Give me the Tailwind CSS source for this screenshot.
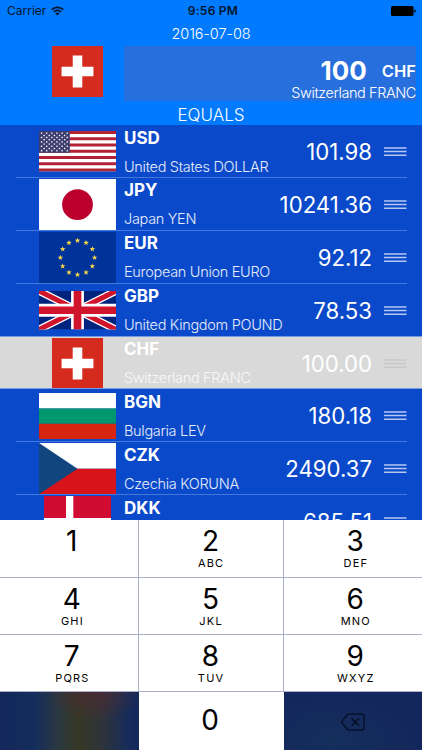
<!DOCTYPE html>
<html lang="en">
<head>
    <meta charset="UTF-8">
    <meta name="viewport" content="width=device-width, initial-scale=1.0">
    <title>Currency Converter</title>
    <script src="https://cdn.jsdelivr.net/npm/@tailwindcss/browser@4"></script>
</head>
<body class="bg-[#0a49c9] font-['Inter','Liberation_Sans',sans-serif]">

    <div class="w-[422px] h-[750px] overflow-hidden flex flex-col">
        <header class="h-[125px] shrink-0 bg-[#007aff] text-white">
            <!-- Status bar -->
            <div class="h-[22px] grid grid-cols-3 items-center pl-[7px] pr-[6px] text-[#03152d]">
                <div class="flex items-center gap-[5px] text-[12px]">
                    <span>Carrier</span>
                    <svg class="w-[13px] h-[10px]" viewBox="0 0 13 10" fill="none" stroke="currentColor" stroke-width="1.7">
                        <path d="M.7 3.7a8.2 8.2 0 0 1 11.6 0M2.8 5.9a5.2 5.2 0 0 1 7.4 0"/>
                        <path d="M6.5 9.6 4.4 7.5a3 3 0 0 1 4.2 0z" fill="currentColor" stroke="none"/>
                    </svg>
                </div>
                <div class="text-center text-[12px] font-semibold tracking-[0.25px] whitespace-nowrap pl-[3px]">9:56 PM</div>
                <svg class="w-[25px] h-[10px] justify-self-end" viewBox="0 0 25 10" fill="black">
                    <rect width="22.5" height="10" rx="1.5"/>
                    <path d="M23.3 3.2q1.5.4 1.5 1.8t-1.5 1.8z"/>
                </svg>
            </div>
            <div class="h-[24px] leading-[23px] text-center text-[14.5px] tracking-[-0.1px] font-light">2016-07-08</div>
            <div class="flex h-[55px] pl-[52px] pr-[6px]">
                <svg class="w-[51px] h-[51px] mr-[21px]" viewBox="0 0 32 32"><use href="#flag-ch"/></svg>
                <div class="flex-1 bg-[#276fdc] text-right pt-[12px]">
                    <div class="flex justify-end items-center gap-[15px] h-[26px]">
                        <span class="text-[26px] leading-[26px] font-bold">100</span>
                        <span class="text-[16.5px] leading-[26px] font-semibold">CHF</span>
                    </div>
                    <div class="text-[14.5px] leading-[17px] tracking-[-0.42px] font-light">Switzerland FRANC</div>
                </div>
            </div>
            <div class="h-[24px] leading-[29px] text-center text-[17px] font-light">EQUALS</div>
        </header>

        <main id="rates" class="h-[394.5px] shrink-0 overflow-hidden"></main>

        <!-- Number pad -->
        <div id="keypad" class="flex-1 grid grid-cols-[138.5px_145px_138.5px] grid-rows-[58px_57px_57px_58.5px] text-black"></div>
    </div>

    <svg class="hidden">
        <symbol id="flag-ch" viewBox="0 0 32 32">
            <path fill="#d52b1e" d="M0 0h32v32H0z"/>
            <path fill="#fff" d="M13 6h6v7h7v6h-7v7h-6v-7H6v-6h7z"/>
        </symbol>
        <symbol id="flag-us" viewBox="0 0 76 40" preserveAspectRatio="none">
            <path fill="#fff" d="M0 0h76v40H0z"/>
            <path stroke="#b22234" stroke-width="3.077" d="M0 1.54h76M0 7.69h76M0 13.85h76M0 20h76M0 26.15h76M0 32.3h76M0 38.46h76"/>
            <path fill="#3c3b6e" d="M0 0h30.4v21.54H0z"/>
            <g id="us-stars" fill="#fff"></g>
        </symbol>
        <symbol id="flag-jp" viewBox="0 0 90 60">
            <path fill="#fff" d="M0 0h90v60H0z"/>
            <circle cx="45" cy="30" r="18" fill="#bc002d"/>
        </symbol>
        <symbol id="flag-eu" viewBox="0 0 90 60">
            <path fill="#039" d="M0 0h90v60H0z"/>
            <g id="eu-stars" fill="#f7d54a"></g>
        </symbol>
        <symbol id="flag-gb" viewBox="0 0 60 30">
            <clipPath id="gb-clip"><path d="M30 15h30v15zv15H0zH0V0zV0h30z"/></clipPath>
            <path fill="#00247d" d="M0 0h60v30H0z"/>
            <path stroke="#fff" stroke-width="6" d="m0 0 60 30m0-30L0 30"/>
            <path stroke="#cf142b" stroke-width="4" clip-path="url(#gb-clip)" d="m0 0 60 30m0-30L0 30"/>
            <path stroke="#fff" stroke-width="10" d="M30 0v30M0 15h60"/>
            <path stroke="#cf142b" stroke-width="6" d="M30 0v30M0 15h60"/>
        </symbol>
        <symbol id="flag-bg" viewBox="0 0 50 30">
            <path fill="#fff" d="M0 0h50v10H0z"/>
            <path fill="#00966e" d="M0 10h50v10H0z"/>
            <path fill="#d62612" d="M0 20h50v10H0z"/>
        </symbol>
        <symbol id="flag-cz" viewBox="0 0 90 60">
            <path fill="#fff" d="M0 0h90v30H0z"/>
            <path fill="#d7141a" d="M0 30h90v30H0z"/>
            <path fill="#11457e" d="m0 0 45 30L0 60z"/>
        </symbol>
        <symbol id="flag-dk" viewBox="0 0 37 28">
            <path fill="#d00c33" d="M0 0h37v28H0z"/>
            <path fill="#fff" d="M12 0h4v28h-4zM0 12h37v4H0z"/>
        </symbol>
    </svg>

    <script>
        const rates = [
            { code: 'USD', name: 'United States DOLLAR', value: '101.98', flag: 'us', w: 77, h: 40.5 },
            { code: 'JPY', name: 'Japan YEN', value: '10241.36', flag: 'jp', w: 77, h: 51.3 },
            { code: 'EUR', name: 'European Union EURO', value: '92.12', flag: 'eu', w: 77, h: 51.3 },
            { code: 'GBP', name: 'United Kingdom POUND', value: '78.53', flag: 'gb', w: 77, h: 38.5 },
            { code: 'CHF', name: 'Switzerland FRANC', value: '100.00', flag: 'ch', w: 51, h: 51, selected: true },
            { code: 'BGN', name: 'Bulgaria LEV', value: '180.18', flag: 'bg', w: 77, h: 46.2 },
            { code: 'CZK', name: 'Czechia KORUNA', value: '2490.37', flag: 'cz', w: 77, h: 51.3 },
            { code: 'DKK', name: '', value: '685.51', flag: 'dk', w: 67.8, h: 51.3 },
        ];

        const star = (cx, cy, r) => {
            const pts = [];
            for (let i = 0; i < 10; i++) {
                const a = Math.PI * i / 5;
                const d = i % 2 ? r * 0.42 : r;
                pts.push(`${cx + d * Math.sin(a)},${cy - d * Math.cos(a)}`);
            }
            return `<polygon points="${pts.join(' ')}"/>`;
        };

        let usStars = '';
        for (let r = 1; r < 10; r++) {
            for (let c = 1; c < 12; c++) {
                if ((r + c) % 2 === 0) usStars += star(c * 30.4 / 12, r * 2.154, 1.25);
            }
        }
        document.getElementById('us-stars').innerHTML = usStars;

        let euStars = '';
        for (let i = 0; i < 12; i++) {
            const a = Math.PI * i / 6;
            euStars += star(45 + 20 * Math.sin(a), 30 - 20 * Math.cos(a), 3.4);
        }
        document.getElementById('eu-stars').innerHTML = euStars;

        document.getElementById('rates').innerHTML = rates.map((r, i) => {
            // full-width separators next to the selected row, inset elsewhere
            const next = rates[i + 1];
            const line = r.selected || (next && next.selected) ? 'bg-[#7a9be0]' : 'mx-[15.5px] bg-[#4479dc]';
            return `
                <div class="h-[52.9px] flex flex-col text-white ${r.selected ? 'bg-[#d9d9d9]' : 'bg-[#0a49c9]'}">
                    <div class="flex-1 min-h-0 flex pl-[39px] pr-[15.5px]">
                        <div class="w-[77px] h-[52px] mt-[0.6px] flex items-center justify-center">
                            <svg style="width:${r.w}px;height:${r.h}px"><use href="#flag-${r.flag}"/></svg>
                        </div>
                        <div class="pl-[8px] pt-[2.5px] whitespace-nowrap">
                            <div class="text-[17px] leading-[20px] font-bold">${r.code}</div>
                            <div class="mt-[9px] text-[14.5px] leading-[20px] tracking-[-0.31px] font-light ${r.selected ? 'text-white/80' : 'text-white/90'}">${r.name}</div>
                        </div>
                        <div class="ml-auto h-[53px] leading-[53px] text-[22.2px] whitespace-nowrap">${r.value}</div>
                        <svg class="ml-[12px] mt-[22px] w-[22.5px] h-[9px] ${r.selected ? 'text-[#c7c7cc]' : 'text-[#b5c8ee]'}" viewBox="0 0 22.5 9" fill="none" stroke="currentColor" stroke-width="1.5">
                            <path d="M0 1h22.5M0 4.6h22.5M0 8.2h22.5"/>
                        </svg>
                    </div>
                    <div class="h-px shrink-0 ${line}"></div>
                </div>`;
        }).join('');

        const keys = [['1', ''], ['2', 'ABC'], ['3', 'DEF'], ['4', 'GHI'], ['5', 'JKL'], ['6', 'MNO'], ['7', 'PQRS'], ['8', 'TUV'], ['9', 'WXYZ']];
        const colPad = ['pl-[6px]', '', 'pl-[5px]'];
        const keypad = document.getElementById('keypad');
        keypad.innerHTML = keys.map(([digit, letters], i) => `
            <div class="bg-white text-center pt-[6px] border-b border-[#a9afc6] ${i % 3 < 2 ? 'border-r' : ''} ${colPad[i % 3]}">
                <div class="text-[28px] leading-[31px]">${digit}</div>
                <div class="text-[11px] leading-[13px] tracking-[1.2px] pl-[1.2px]">${letters}</div>
            </div>`).join('') + `
            <div class="bg-[linear-gradient(90deg,#14275c_0%,#142d5c_25%,#2b3840_42%,#353824_56%,#2d333a_74%,#162c5b_92%,#14295b_100%)]">
                <div class="w-full h-full bg-[radial-gradient(ellipse_48px_30px_at_68%_0%,#502b35cc,#502b3500)]"></div>
            </div>
            <div class="bg-white text-center pt-[13px] pr-[2px] text-[28px] leading-[31px]">0</div>
            <div class="bg-[radial-gradient(ellipse_at_35%_90%,#142f5c,#14275c_65%)] flex items-center justify-center">
                <svg class="w-[24px] h-[18px] mt-[2px]" viewBox="0 0 24 18" fill="none" stroke="#07102b" stroke-width="1.5" stroke-linejoin="round" stroke-linecap="round">
                    <path d="M8.2.9h12.5a2.4 2.4 0 0 1 2.4 2.4v11.4a2.4 2.4 0 0 1-2.4 2.4H8.2q-.9 0-1.6-.7L1.3 10.2q-1.1-1.2 0-2.4l5.3-6.2q.7-.7 1.6-.7z"/>
                    <path d="m11 5.6 6.8 6.8m0-6.8L11 12.4"/>
                </svg>
            </div>`;
    </script>
</body>
</html>
